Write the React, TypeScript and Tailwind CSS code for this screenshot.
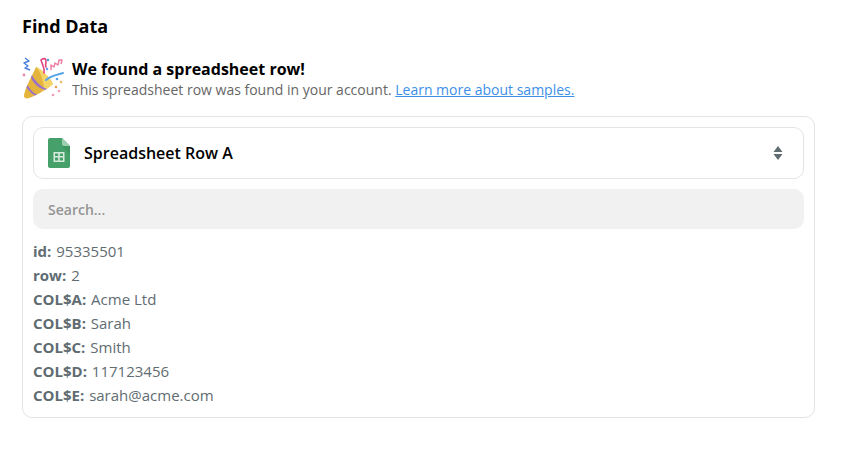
import React from "react";

function Party() {
  return (
    <svg width="44" height="44" viewBox="0 0 44 44" className="shrink-0 -ml-[1px] mr-[1px]">
      {/* cone */}
      <path d="M15 11 C20 13 29 21 32 28 C25 34 13 41 6 42.5 C4 42.5 2.5 41 3 39 C5 30 11 20 15 11Z" fill="#e4b43c" />
      <path d="M15 11 C20 13 29 21 32 28 C29 31 26 33 23 34.5 C23 26 20 16 15 11Z" fill="#f4d468" />
      <path d="M11 19 C14 25 20 31 26 33 L24 34 C17 32 12 27 10 21.5Z" fill="#9b72c9" />
      <path d="M6.5 29 C9 33 12 37 16 38.5 L14 39.5 C10.5 38 7.5 34.5 5.5 31.5Z" fill="#9b72c9" />
      {/* streamers */}
      <path d="M25 24 C29 20 35 19 42 17" stroke="#5aa5e8" strokeWidth="2" fill="none" strokeLinecap="round" />
      <path d="M23 17 C24 12 21 8 20 4 C22 2 25 2 25 5 C25 7 24 8 25 11" stroke="#e0447c" strokeWidth="1.6" fill="none" strokeLinecap="round" />
      <path d="M30 14 L30 9 L33 11 L34 7 L37 9 L38 4 L41 4 L40 8" stroke="#ee7fa6" strokeWidth="1.5" fill="none" strokeLinejoin="round" />
      <path d="M4 2 L8 5 L3 7 L7 10 L4 12 L9 14" stroke="#4a80dc" strokeWidth="1.4" fill="none" strokeLinejoin="round" />
      {/* confetti */}
      <circle cx="27" cy="4" r="1.2" fill="#4a9be0" />
      <circle cx="26" cy="13" r="1.2" fill="#5a9ae6" />
      <circle cx="3" cy="19" r="1.4" fill="#e98aa8" />
      <circle cx="36" cy="23" r="1.3" fill="#5aa5e8" />
      <circle cx="40" cy="26" r="1.3" fill="#f0b860" />
      <circle cx="35" cy="31" r="1.3" fill="#e8a050" />
      <circle cx="38" cy="35" r="1.3" fill="#f0a0b0" />
      <circle cx="32" cy="39" r="1.3" fill="#ee9ab0" />
    </svg>
  );
}

function Sheet() {
  return (
    <svg width="22" height="30" viewBox="0 0 22 30" className="shrink-0">
      <path d="M2 0 H14 L22 8 V28 A2 2 0 0 1 20 30 H2 A2 2 0 0 1 0 28 V2 A2 2 0 0 1 2 0Z" fill="#46a06a" />
      <path d="M14 0 L22 8 H16 A2 2 0 0 1 14 6Z" fill="#9ccfb0" />
      <path d="M14 8 L22 16 V8Z" fill="#338a55" opacity="0.5" />
      <path d="M5.5 14 H16.5 V24 H5.5Z M7 15.5 V18 H10.2 V15.5Z M11.8 15.5 V18 H15 V15.5Z M7 19.5 V22.5 H10.2 V19.5Z M11.8 19.5 V22.5 H15 V19.5Z" fill="#d5ebdd" fillRule="evenodd" />
    </svg>
  );
}

const rows: [string, string][] = [
  ["id:", "95335501"],
  ["row:", "2"],
  ["COL$A:", "Acme Ltd"],
  ["COL$B:", "Sarah"],
  ["COL$C:", "Smith"],
  ["COL$D:", "117123456"],
  ["COL$E:", "sarah@acme.com"],
];

export default function App() {
  return (
    <div className="w-[843px] h-[451px] bg-white pl-[22px] pt-[15px] font-['Open_Sans',sans-serif] overflow-hidden">
      <h1 className="text-[18px] leading-[22px] font-bold text-black">Find Data</h1>
      <div className="flex items-start gap-[6px] mt-[19px] h-[44px]">
        <Party />
        <div className="pt-[3px]">
          <div className="text-[16px] leading-[20px] font-bold text-black">We found a spreadsheet row!</div>
          <div className="text-[14px] leading-[20px] mt-[1px] text-[#666666]">
            This spreadsheet row was found in your account.{" "}
            <span className="text-[#3d8fe8] underline">Learn more about samples.</span>
          </div>
        </div>
      </div>
      <div className="w-[793px] h-[302px] mt-[16px] border border-[#e4e4e4] rounded-[10px] p-[10px]">
        <div className="h-[52px] border border-[#e4e4e4] rounded-[10px] flex items-center pl-[14px] pr-[20px]">
          <Sheet />
          <span className="ml-[14px] text-[16px] font-semibold text-black">Spreadsheet Row A</span>
          <svg width="10" height="16" viewBox="0 0 10 16" className="ml-auto">
            <path d="M5 1 L9.5 7 H0.5Z M5 15 L9.5 9 H0.5Z" fill="#5f6c72" />
          </svg>
        </div>
        <div className="h-[40px] mt-[10px] bg-[#f1f1f1] rounded-[10px] flex items-center px-[15px] text-[14px] font-semibold text-[#959595]">
          Search...
        </div>
        <div className="mt-[10px]">
          {rows.map(([k, v]) => (
            <div key={k} className="h-[24px] leading-[24px] text-[15px] text-[#5f6c72]">
              <span className="font-bold mr-[1px]">{k}</span> {v}
            </div>
          ))}
        </div>
      </div>
    </div>
  );
}
